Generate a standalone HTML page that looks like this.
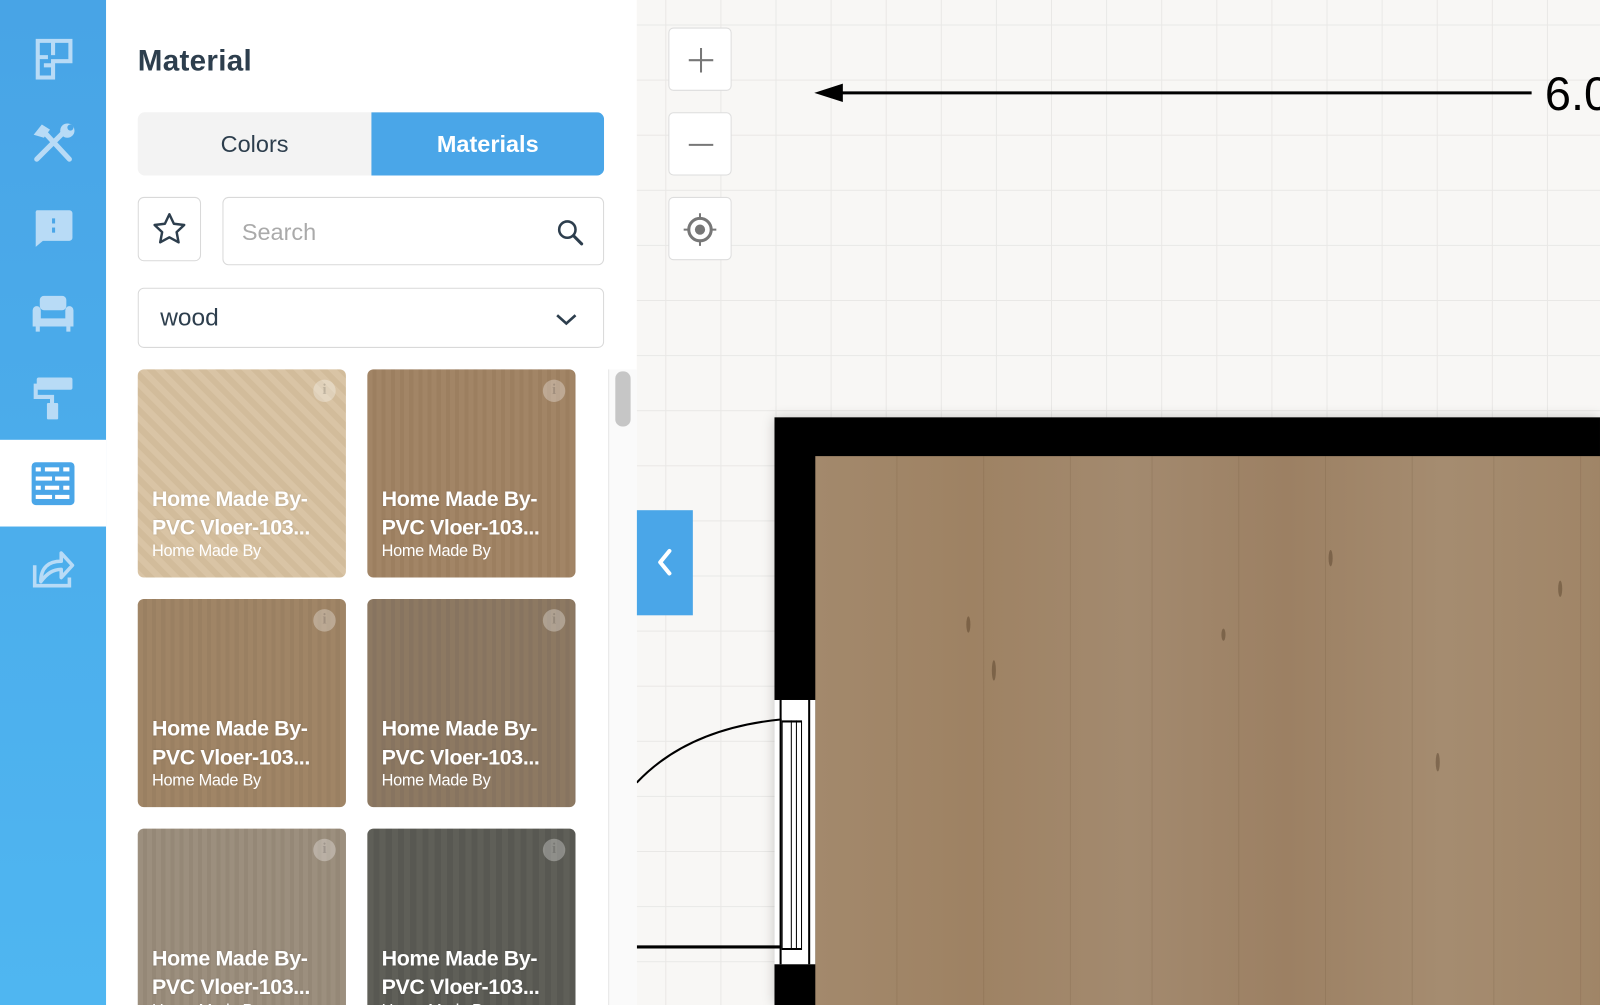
<!DOCTYPE html>
<html><head><meta charset="utf-8"><style>
*{box-sizing:border-box;margin:0;padding:0}
body{width:1600px;height:1005px;overflow:hidden;font-family:"Liberation Sans",sans-serif;position:relative;background:#f8f7f5}
#w{position:absolute;left:0;top:0;width:1568px;height:985px;transform:scale(1.0204);transform-origin:0 0}
.side{position:absolute;left:0;top:0;width:104px;height:985px;background:linear-gradient(180deg,#48a4e6,#4fb6f1)}
.side svg{position:absolute;left:30px}
.act{position:absolute;left:0;top:431px;width:104px;height:85px;background:#fff}
.panel{position:absolute;left:104px;top:0;width:520px;height:985px;background:#fff;overflow:hidden}
h1{position:absolute;left:31px;top:44px;font-size:29px;font-weight:bold;color:#2d3e4d;letter-spacing:.3px}
.tabs{position:absolute;left:31px;top:110px;width:457px;height:62px;border-radius:7px;background:#f3f3f3;overflow:hidden}
.tabs div{position:absolute;top:0;height:62px;line-height:62px;text-align:center;font-size:23px}
.box{position:absolute;border:1px solid #d9d9d9;border-radius:6px;background:#fff}
.tile{position:absolute;width:204px;height:204px;border-radius:6px;overflow:hidden;color:#fff}
.tile b{position:absolute;left:14px;top:114px;font-size:21px;line-height:28px;letter-spacing:-.4px;text-shadow:0 0 2px rgba(0,0,0,.15)}
.tile span{position:absolute;left:14px;top:170px;font-size:16px;letter-spacing:-.3px}
.tile i{position:absolute;right:10px;top:10px;width:22px;height:22px;border-radius:50%;background:rgba(255,255,255,.3);font:bold 14px "Liberation Serif",serif;color:rgba(0,0,0,.15);text-align:center;line-height:22px;font-style:normal}
.zb{position:absolute;left:655px;width:62px;height:62px;background:#fff;border:1px solid #ddd;border-radius:5px}
</style></head><body><div id="w">
<div style="position:absolute;left:624px;top:0;width:944px;height:985px;background-color:#f8f7f5;background-image:linear-gradient(90deg,#e9e8e6 1px,transparent 1px),linear-gradient(#e9e8e6 1px,transparent 1px);background-size:54px 54px;background-position:28px 24px"></div>

<svg style="position:absolute;left:790px;top:60px" width="778" height="60">
<line x1="20" y1="31" x2="711" y2="31" stroke="#000" stroke-width="3"/>
<polygon points="8,31 36,22 36,40" fill="#000"/>
<text x="724" y="48" font-size="46" font-family="Liberation Sans" fill="#000">6.0</text>
</svg>

<div style="position:absolute;left:759px;top:409px;width:809px;height:576px;background:#000;box-shadow:0 0 12px rgba(0,0,0,.2)"></div>
<div style="position:absolute;left:799px;top:447px;width:769px;height:538px;background:linear-gradient(90deg,#a3896c,#9e8263 20%,#a38a6f 40%,#9c8063 60%,#a58c70 80%,#a08567);"></div>
<svg style="position:absolute;left:799px;top:447px" width="769" height="538">
<g stroke="rgba(80,55,30,.12)" stroke-width="1">
<line x1="80" y1="0" x2="80" y2="558"/><line x1="165" y1="0" x2="165" y2="558"/><line x1="250" y1="0" x2="250" y2="558"/><line x1="330" y1="0" x2="330" y2="558"/><line x1="415" y1="0" x2="415" y2="558"/><line x1="500" y1="0" x2="500" y2="558"/><line x1="585" y1="0" x2="585" y2="558"/><line x1="665" y1="0" x2="665" y2="558"/><line x1="750" y1="0" x2="750" y2="558"/>
</g>
<g fill="rgba(60,40,20,.35)"><ellipse cx="150" cy="165" rx="2" ry="8"/><ellipse cx="175" cy="210" rx="2" ry="10"/><ellipse cx="505" cy="100" rx="2" ry="8"/><ellipse cx="400" cy="175" rx="2" ry="6"/><ellipse cx="730" cy="130" rx="2" ry="8"/><ellipse cx="610" cy="300" rx="2" ry="9"/></g>
</svg>
<div style="position:absolute;left:759px;top:686px;width:40px;height:259px;background:#fff"></div>
<div style="position:absolute;left:764px;top:686px;width:2px;height:259px;background:#000"></div>
<div style="position:absolute;left:792px;top:686px;width:2px;height:259px;background:#000"></div>
<div style="position:absolute;left:766px;top:706px;width:20px;height:225px;border:1px solid #000;border-top:2px solid #000;border-bottom:2px solid #000"></div>
<div style="position:absolute;left:775px;top:706px;width:1px;height:225px;background:#000"></div>
<div style="position:absolute;left:780px;top:706px;width:1px;height:225px;background:#000"></div>
<svg style="position:absolute;left:624px;top:700px" width="145" height="240"><path d="M0,67 Q50,14 142,5" fill="none" stroke="#000" stroke-width="2"/><line x1="0" y1="228" x2="142" y2="228" stroke="#000" stroke-width="3"/></svg>

<div class="zb" style="top:27px"><svg width="62" height="62"><path d="M31 19v24M19 31h24" stroke="#777" stroke-width="2"/></svg></div>
<div class="zb" style="top:110px"><svg width="62" height="62"><path d="M19 31h24" stroke="#777" stroke-width="2"/></svg></div>
<div class="zb" style="top:193px"><svg width="62" height="62"><circle cx="30" cy="31" r="11" fill="none" stroke="#777" stroke-width="3"/><circle cx="30" cy="31" r="5" fill="#777"/><path d="M30 15v6M30 41v6M14 31h6M40 31h6" stroke="#777" stroke-width="2"/></svg></div>

<div style="position:absolute;left:624px;top:500px;width:55px;height:103px;background:#4aa6e8"><svg width="55" height="103"><path d="M32 40l-9 11 9 11" fill="none" stroke="#fff" stroke-width="4" stroke-linecap="round" stroke-linejoin="round"/></svg></div>

<div class="side">
<svg style="top:38px" width="44" height="40" viewBox="0 0 44 40"><path d="M7 2h32v20H22v16H7z" fill="none" stroke="#b8dbf6" stroke-width="4"/><path d="M22 2v14M7 18h10M13 26h9" stroke="#b8dbf6" stroke-width="4"/></svg>
<svg style="top:118px" width="44" height="44" viewBox="0 0 44 44"><path d="M6 38L36 8M12 10l26 28" stroke="#b8dbf6" stroke-width="5" stroke-linecap="round"/><path d="M3 14l8-10 8 5-6 8z" fill="#b8dbf6"/><circle cx="36" cy="10" r="7" fill="#b8dbf6"/><circle cx="39" cy="7" r="3" fill="#4aa6e8"/></svg>
<svg style="top:204px" width="44" height="40" viewBox="0 0 44 40"><path d="M6 2h32a3 3 0 0 1 3 3v24a3 3 0 0 1-3 3H12l-7 6V5a3 3 0 0 1 1-3z" fill="#b8dbf6"/><rect x="21" y="10" width="3" height="5" fill="#4aa6e8"/><rect x="21" y="19" width="3" height="5" fill="#4aa6e8"/></svg>
<svg style="top:288px" width="44" height="40" viewBox="0 0 44 40"><rect x="9" y="2" width="26" height="14" rx="4" fill="#b8dbf6"/><path d="M2 16a4 4 0 0 1 8 0v8h24v-8a4 4 0 0 1 8 0v16H2z" fill="#b8dbf6"/><rect x="5" y="32" width="4" height="5" fill="#b8dbf6"/><rect x="35" y="32" width="4" height="5" fill="#b8dbf6"/></svg>
<svg style="top:368px" width="44" height="44" viewBox="0 0 44 44"><rect x="6" y="2" width="35" height="12" rx="2" fill="#b8dbf6"/><path d="M5 8v13h16v6" fill="none" stroke="#b8dbf6" stroke-width="4"/><rect x="16" y="27" width="11" height="16" rx="1" fill="#b8dbf6"/></svg>
<div class="act"></div>
<svg style="top:452px" width="44" height="44" viewBox="0 0 44 44"><rect x="1" y="1" width="42" height="42" rx="4" fill="#4aa6e8"/><g fill="#fff"><rect x="5" y="6" width="5" height="4"/><rect x="14" y="6" width="14" height="4"/><rect x="32" y="6" width="6" height="4"/><rect x="5" y="15" width="16" height="4"/><rect x="24" y="15" width="14" height="4"/><rect x="5" y="24" width="5" height="4"/><rect x="14" y="24" width="14" height="4"/><rect x="32" y="24" width="6" height="4"/><rect x="5" y="33" width="16" height="4"/><rect x="24" y="33" width="14" height="4"/></g></svg>
<svg style="top:534px" width="44" height="44" viewBox="0 0 44 44"><path d="M4 20v20h34v-8" fill="none" stroke="#b8dbf6" stroke-width="3.5"/><path d="M10 36c0-14 8-20 20-20V8l11 12-11 12v-8c-8 0-14 4-20 12z" fill="none" stroke="#b8dbf6" stroke-width="3.5" stroke-linejoin="round"/></svg>
</div>

<div class="panel">
<h1>Material</h1>
<div class="tabs"><div style="left:0;width:229px;color:#2d3e4d">Colors</div><div style="left:229px;width:228px;background:#4aa6e8;color:#fff;font-weight:bold">Materials</div></div>
<div class="box" style="left:31px;top:193px;width:62px;height:63px"><svg width="62" height="63"><path d="M30 16l4.4 9.3 10.1 1.2-7.4 7 1.9 10-9-4.9-9 4.9 1.9-10-7.4-7 10.1-1.2z" fill="none" stroke="#2d3e4d" stroke-width="2.4" stroke-linejoin="round"/></svg></div>
<div class="box" style="left:114px;top:193px;width:374px;height:67px"><span style="position:absolute;left:18px;top:20px;font-size:23px;color:#aaa">Search</span><svg style="position:absolute;left:326px;top:20px" width="30" height="30"><circle cx="11" cy="11" r="8" fill="none" stroke="#2d3e4d" stroke-width="2.5"/><path d="M17 17l8 8" stroke="#2d3e4d" stroke-width="3" stroke-linecap="round"/></svg></div>
<div class="box" style="left:31px;top:282px;width:457px;height:59px"><span style="position:absolute;left:21px;top:15px;font-size:24px;color:#2d3e4d">wood</span><svg style="position:absolute;left:404px;top:18px" width="30" height="24"><path d="M6 8l9 8 9-8" fill="none" stroke="#2d3e4d" stroke-width="2.6"/></svg></div>

<div class="tile" style="left:31px;top:362px;background:repeating-linear-gradient(45deg,#d9c4a5 0 6px,#d2bc9b 6px 12px)"><i>i</i><b>Home Made By-<br>PVC Vloer-103...</b><span>Home Made By</span></div>
<div class="tile" style="left:256px;top:362px;background:repeating-linear-gradient(90deg,#a28566 0 5px,#9c7f60 5px 9px)"><i>i</i><b>Home Made By-<br>PVC Vloer-103...</b><span>Home Made By</span></div>
<div class="tile" style="left:31px;top:587px;background:repeating-linear-gradient(90deg,#a08566 0 5px,#9a8062 5px 9px)"><i>i</i><b>Home Made By-<br>PVC Vloer-103...</b><span>Home Made By</span></div>
<div class="tile" style="left:256px;top:587px;background:repeating-linear-gradient(90deg,#8d7962 0 5px,#877460 5px 9px)"><i>i</i><b>Home Made By-<br>PVC Vloer-103...</b><span>Home Made By</span></div>
<div class="tile" style="left:31px;top:812px;background:repeating-linear-gradient(90deg,#9c8f7e 0 5px,#958877 5px 9px)"><i>i</i><b>Home Made By-<br>PVC Vloer-103...</b><span>Home Made By</span></div>
<div class="tile" style="left:256px;top:812px;background:repeating-linear-gradient(90deg,#5f5f58 0 6px,#585852 6px 12px)"><i>i</i><b>Home Made By-<br>PVC Vloer-103...</b><span>Home Made By</span></div>

<div style="position:absolute;left:492px;top:362px;width:28px;height:643px;background:#fafafa;border-left:1px solid #e6e6e6"></div>
<div style="position:absolute;left:499px;top:364px;width:15px;height:54px;border-radius:7px;background:#c6c6c6"></div>
</div>
</div></body></html>
